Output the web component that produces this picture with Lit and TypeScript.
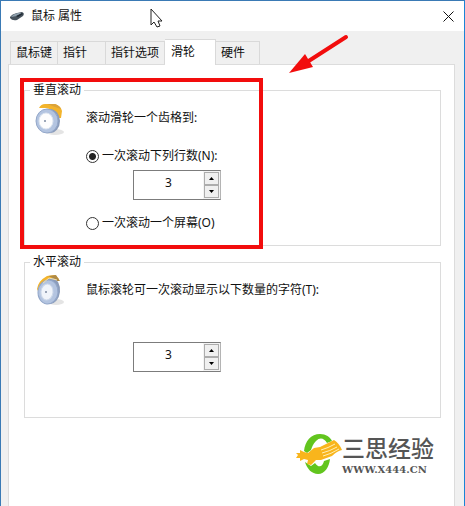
import { LitElement, html, css, svg } from "lit";
import { customElement, property, state } from "lit/decorators.js";
import { classMap } from "lit/directives/class-map.js";

@customElement("number-spinner")
class NumberSpinner extends LitElement {
  @property() label = "";
  @property({ type: Number }) value = 3;

  static styles = css`
    :host {
      display: block;
    }
    .box {
      display: flex;
      box-sizing: border-box;
      width: 88px;
      height: 30px;
      border: 1px solid #7c7c7c;
      border-right-color: #b4b4b4;
      background: #fff;
    }
    .value {
      flex: 1;
      min-width: 0;
      border: 0;
      padding: 0 0 6px;
      margin: 0;
      outline: 0;
      background: none;
      text-align: center;
      color: #111;
      font: 12px "Noto Sans", "Noto Sans CJK SC", sans-serif;
    }
    .steps {
      display: flex;
      flex-direction: column;
      width: 17px;
      padding: 1px;
      box-sizing: border-box;
      background: #f4f4f4;
    }
    .step {
      flex: 1;
      display: flex;
      align-items: center;
      justify-content: center;
      padding: 0;
      border: 1px solid #adadad;
      background: #f0f0f0;
    }
    .glyph {
      display: block;
    }
  `;

  render() {
    return html`
      <div class="box">
        <input
          class="value"
          type="text"
          aria-label=${this.label}
          .value=${String(this.value)}
          @change=${(e: Event) => (this.value = Number((e.target as HTMLInputElement).value) || 1)}
        />
        <div class="steps">
          <button class="step" aria-label="增加" @click=${() => this.value++}>
            <svg class="glyph" width="5" height="3"><path d="M0 3 L2.5 0 L5 3Z" /></svg>
          </button>
          <button class="step" aria-label="减少" @click=${() => (this.value = Math.max(1, this.value - 1))}>
            <svg class="glyph" width="5" height="3"><path d="M0 0 L2.5 3 L5 0Z" /></svg>
          </button>
        </div>
      </div>
    `;
  }
}

const verticalWheel = svg`
  <ellipse cx="20" cy="29" rx="9" ry="3" fill="#d9d9d9" opacity=".7" />
  <path d="M4 5 Q6 1 10 1 L20 1 Q26 3 27 8 L26 15 L21 15 Q19 6 11 5Z" fill="#f3b42c" />
  <path d="M12 1 L20 1 Q25 3 26 6 L20 4Z" fill="#dba33a" />
  <ellipse cx="15" cy="18" rx="10" ry="12" fill="#8b9cba" />
  <ellipse cx="12" cy="18" rx="11" ry="12" fill="#b3c4e0" stroke="#93a7c9" />
  <ellipse cx="11" cy="18" rx="7" ry="8" fill="#fdfdfd" stroke="#dde5f0" />
  <circle cx="10" cy="18" r="1" fill="#7d8aa0" />`;

const horizontalWheel = svg`
  <ellipse cx="21" cy="27" rx="8" ry="3" fill="#d9d9d9" opacity=".7" />
  <path d="M2 14 Q3 6 12 1 L20 0 L24 4 L15 6 L8 9 L3 16Z" fill="#f3b42c" />
  <path d="M13 1 L21 0 L25 6 L21 6 L18 3Z" fill="#b08a45" />
  <ellipse cx="16" cy="16" rx="9" ry="13" transform="rotate(6 16 16)" fill="#8b9cba" />
  <ellipse cx="13" cy="17" rx="10" ry="12" transform="rotate(6 13 17)" fill="#b3c4e0" stroke="#93a7c9" />
  <ellipse cx="12" cy="17" rx="6" ry="8" transform="rotate(6 12 17)" fill="#f0f4fa" stroke="#cdd8e9" />
  <path d="M8 8 L14 3 L22 5" fill="none" stroke="#f7e0a6" />
  <circle cx="11" cy="17" r="1" fill="#7d8aa0" />`;

@customElement("app-root")
class AppRoot extends LitElement {
  @state() private tab = "滑轮";
  private tabs = ["鼠标键", "指针", "指针选项", "滑轮", "硬件"];

  static styles = css`
    :host {
      display: block;
      min-height: 100vh;
      font: 12px/20px "Noto Sans", "Noto Sans CJK SC", sans-serif;
      color: #111;
    }
    .window {
      position: relative;
      display: flex;
      flex-direction: column;
      box-sizing: border-box;
      min-height: 100vh;
      border: 1px solid #3a7ab5;
      border-right-color: #1a84d6;
      border-bottom: 0;
      background: #f0f0f0;
    }
    .titlebar {
      display: flex;
      align-items: center;
      height: 30px;
      padding: 0 8px;
      background: #fff;
    }
    .title {
      flex: 1;
      margin: 0 0 0 6px;
      font: inherit;
    }
    .close {
      display: flex;
      padding: 2px;
      border: 0;
      background: none;
    }
    .tabs {
      display: flex;
      align-items: flex-end;
      padding: 8px 9px 0;
    }
    .tab {
      box-sizing: border-box;
      height: 23px;
      padding: 0 5px;
      border: 1px solid #d9d9d9;
      border-left-width: 0;
      border-bottom: 0;
      background: #f0f0f0;
      color: inherit;
      font: inherit;
      text-align: left;
      white-space: nowrap;
    }
    .tab:first-child {
      border-left-width: 1px;
    }
    .short {
      min-width: 48px;
    }
    .tab:last-child {
      min-width: 44px;
    }
    .active {
      position: relative;
      height: 26px;
      margin-bottom: -1px;
      min-width: 51px;
      padding: 0 6px 2px;
      background: #fff;
    }
    .panel {
      flex: 1;
      margin: 0 9px 0 7px;
      padding: 16px 13px 0 15px;
      border: 1px solid #dcdcdc;
      border-bottom: 0;
      background: #fff;
    }
    .group {
      min-width: 0;
      margin: 0 0 7px;
      padding: 0;
      border: 1px solid #dcdcdc;
    }
    .legend {
      margin-left: 5px;
      padding: 0 3px;
      line-height: 18px;
    }
    .content {
      display: flex;
      gap: 21px;
      padding: 0 10px;
    }
    .wheel {
      flex: none;
      margin-top: 4px;
    }
    .fields {
      padding: 9px 0 12px;
    }
    .lead {
      margin: 0 0 18px;
    }
    .option {
      display: flex;
      align-items: center;
      gap: 3px;
    }
    .radio {
      appearance: none;
      box-sizing: border-box;
      width: 13px;
      height: 13px;
      margin: 0;
      border: 1px solid #333;
      border-radius: 50%;
      background: #fff;
    }
    .radio:checked {
      background: radial-gradient(circle, #222 0 3px, #fff 4px);
    }
    .spin {
      margin: 4px 0 13px 47px;
    }
    .lone {
      margin: 42px 0 33px 47px;
    }
    .brand {
      display: flex;
      align-items: center;
      justify-content: flex-end;
      padding: 6px 7px 0 0;
    }
    .words {
      display: flex;
      flex-direction: column;
      color: #555;
    }
    .name {
      font: 500 23px/33px "Noto Sans CJK SC", sans-serif;
    }
    .site {
      font: 700 10px/12px "DejaVu Serif", serif;
    }
    .marks {
      position: absolute;
      top: 0;
      left: 0;
      pointer-events: none;
    }
  `;

  render() {
    return html`
      <main class="window">
        <header class="titlebar">
          <svg width="16" height="16" viewBox="0 0 16 16" aria-hidden="true">
            <path d="M1 9 Q3 6 8 5 L13 4 Q16 5 14 8 L8 12 Q3 13 1 10Z" fill="#46525c" />
            <path d="M2 9 Q4 6 9 5 L13 5 L8 8Z" fill="#8fa0ad" />
            <path d="M7 8 L13 5 L14 6 L9 9Z" fill="#202a33" />
          </svg>
          <h1 class="title">鼠标 属性</h1>
          <button class="close" aria-label="关闭">
            <svg width="11" height="11"><path d="M.5 .5 L10.5 10.5 M10.5 .5 L.5 10.5" stroke="#111" /></svg>
          </button>
        </header>
        <nav class="tabs" role="tablist">
          ${this.tabs.map(
            (name) => html`<button
              role="tab"
              aria-selected=${name === this.tab}
              class=${classMap({ tab: true, short: name.length === 2, active: name === this.tab })}
              @click=${() => (this.tab = name)}
            >${name}</button>`
          )}
        </nav>
        <section class="panel">
          <fieldset class="group">
            <legend class="legend">垂直滚动</legend>
            <div class="content">
              <svg class="wheel" width="30" height="33" aria-hidden="true">${verticalWheel}</svg>
              <div class="fields">
                <p class="lead">滚动滑轮一个齿格到:</p>
                <label class="option"><input class="radio" type="radio" name="mode" checked />一次滚动下列行数(N):</label>
                <number-spinner class="spin" label="行数"></number-spinner>
                <label class="option"><input class="radio" type="radio" name="mode" />一次滚动一个屏幕(O)</label>
              </div>
            </div>
          </fieldset>
          <fieldset class="group">
            <legend class="legend">水平滚动</legend>
            <div class="content">
              <svg class="wheel" width="30" height="33" aria-hidden="true">${horizontalWheel}</svg>
              <div class="fields">
                <p class="lead">鼠标滚轮可一次滚动显示以下数量的字符(T):</p>
                <number-spinner class="lone" label="字符数"></number-spinner>
              </div>
            </div>
          </fieldset>
          <div class="brand">
            <svg width="46" height="42" viewBox="0 0 46 42" aria-hidden="true">
              <path d="M8 18 C9 8 15 1 24 1 C30 1 34 4 36 8 L31 10 C28 5 24 4 20 8 C17 11 16 14 15 17 L11 20Z" fill="#62c51e" />
              <path d="M9 29 C11 36 16 41 22 41 C29 41 33 34 34 26 L28 28 C27 33 23 36 19 30 L15 33Z" fill="#62c51e" />
              <path d="M0 20 L4 20 L4 17 L8 19 L12 20 L18 15 L24 14 L38 7 Q43 10 46 17 Q41 18 36 23 L25 27 L20 27 L15 32 L11 31 L12 27 L8 26 L4 28 L4 25 L0 25 L2 22Z" fill="#f9b51c" />
              <path d="M25 17 Q32 15 39 11 M26 20 Q34 18 41 14 M27 23 Q35 21 43 16" fill="none" stroke="#fff0b5" />
            </svg>
            <div class="words">
              <span class="name">三思经验</span>
              <span class="site">WWW.X444.CN</span>
            </div>
          </div>
        </section>
        <svg class="marks" width="360" height="250" aria-hidden="true">
          <path d="M150 8 V24 L153 21 L156 26 L159 25 L157 20 H161Z" fill="#fff" stroke="#222" />
          <rect x="21" y="79" width="239" height="167" fill="none" stroke="#f20d0d" stroke-width="4" />
          <path d="M345 36 L303 63" stroke="#f20d0d" stroke-width="4" stroke-linecap="round" />
          <path d="M288 72 L304 53 L312 66Z" fill="#f20d0d" />
        </svg>
      </main>
    `;
  }
}
